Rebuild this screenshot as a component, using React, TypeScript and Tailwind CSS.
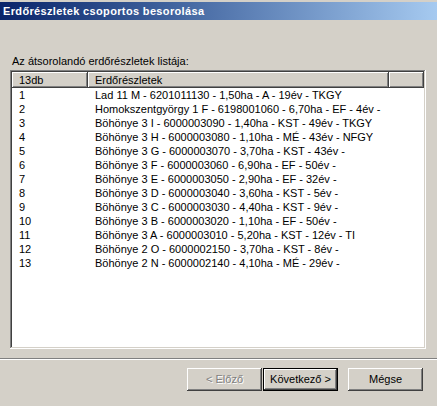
const ROWS = [
  'Lad 11 M - 6201011130 - 1,50ha - A - 19év - TKGY',
  'Homokszentgyörgy 1 F - 6198001060 - 6,70ha - EF - 4év -',
  'Böhönye 3 I - 6000003090 - 1,40ha - KST - 49év - TKGY',
  'Böhönye 3 H - 6000003080 - 1,10ha - MÉ - 43év - NFGY',
  'Böhönye 3 G - 6000003070 - 3,70ha - KST - 43év -',
  'Böhönye 3 F - 6000003060 - 6,90ha - EF - 50év -',
  'Böhönye 3 E - 6000003050 - 2,90ha - EF - 32év -',
  'Böhönye 3 D - 6000003040 - 3,60ha - KST - 5év -',
  'Böhönye 3 C - 6000003030 - 4,40ha - KST - 9év -',
  'Böhönye 3 B - 6000003020 - 1,10ha - EF - 50év -',
  'Böhönye 3 A - 6000003010 - 5,20ha - KST - 12év - TI',
  'Böhönye 2 O - 6000002150 - 3,70ha - KST - 8év -',
  'Böhönye 2 N - 6000002140 - 4,10ha - MÉ - 29év -',
];

const raised =
  'shadow-[inset_-1px_-1px_#404040,inset_1px_1px_#ffffff,inset_-2px_-2px_#808080,inset_2px_2px_#d4d0c8]';
const header =
  'shadow-[inset_-1px_-1px_#404040,inset_1px_1px_#ffffff,inset_-2px_-2px_#808080]';

function Button({ label, disabled, isDefault }: { label: string; disabled?: boolean; isDefault?: boolean }) {
  return (
    <div
      className={`flex h-[23px] w-[75px] items-center justify-center bg-[#d4d0c8] ${
        isDefault
          ? 'shadow-[inset_0_0_0_1px_#000000,inset_-2px_-2px_#404040,inset_2px_2px_#ffffff,inset_-3px_-3px_#808080]'
          : raised
      }`}
    >
      <span
        className={disabled ? 'text-[#808080] [text-shadow:1px_1px_0_#ffffff]' : 'text-black'}
      >
        {label}
      </span>
    </div>
  );
}

export default function App() {
  return (
    <div className="flex h-[406px] w-[437px] flex-col bg-[#d4d0c8] pt-[2px] font-['Liberation_Sans',Arial,sans-serif] text-[11px] leading-[13px] text-black">
      {/* Title bar */}
      <div className="flex h-[18px] items-center bg-linear-to-r from-[#0a246a] to-[#a6caf0] pl-[3px]">
        <span className="font-bold tracking-[0.35px] text-white">Erdőrészletek csoportos besorolása</span>
      </div>

      <div className="mt-[35px] pl-[12px]">Az átsorolandó erdőrészletek listája:</div>

      {/* List view */}
      <div className="ml-[10px] mt-[2px] h-[279px] w-[416px] bg-white p-[2px] shadow-[inset_-1px_-1px_#ffffff,inset_1px_1px_#808080,inset_-2px_-2px_#d4d0c8,inset_2px_2px_#404040]">
        <div className="flex h-[16px] leading-[16px]">
          <div className={`w-[76px] bg-[#d4d0c8] pl-[7px] ${header}`}>13db</div>
          <div className={`w-[301px] bg-[#d4d0c8] pl-[7px] ${header}`}>Erdőrészletek</div>
          <div className={`flex-1 bg-[#d4d0c8] ${header}`} />
        </div>
        <div className="flex flex-col">
          {ROWS.map((r, i) => (
            <div key={i} className="flex h-[14px] leading-[14px]">
              <div className="w-[76px] pl-[7px]">{i + 1}</div>
              <div className="pl-[7px] whitespace-nowrap">{r}</div>
            </div>
          ))}
        </div>
      </div>

      {/* Separator */}
      <div className="mt-[9px] h-[2px] border-t border-b border-t-[#808080] border-b-white" />

      {/* Buttons */}
      <div className="mt-[8px] flex pl-[187px]">
        <Button label="< Előző" disabled />
        <div className="ml-[1px]">
          <Button label="Következő >" isDefault />
        </div>
        <div className="ml-[10px]">
          <Button label="Mégse" />
        </div>
      </div>
    </div>
  );
}
